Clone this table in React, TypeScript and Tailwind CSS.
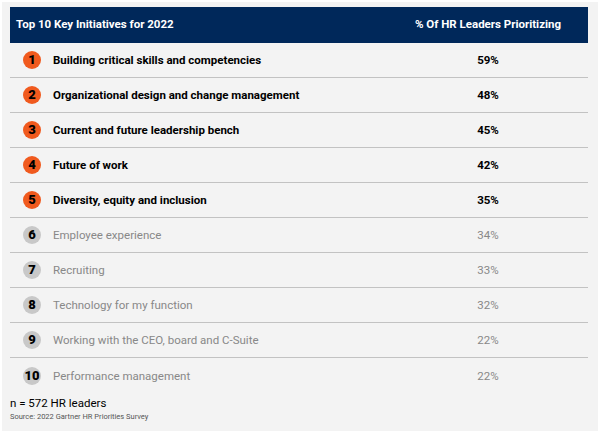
const rows = [
  { n: 1, label: "Building critical skills and competencies", pct: "59%", top: true },
  { n: 2, label: "Organizational design and change management", pct: "48%", top: true },
  { n: 3, label: "Current and future leadership bench", pct: "45%", top: true },
  { n: 4, label: "Future of work", pct: "42%", top: true },
  { n: 5, label: "Diversity, equity and inclusion", pct: "35%", top: true },
  { n: 6, label: "Employee experience", pct: "34%", top: false },
  { n: 7, label: "Recruiting", pct: "33%", top: false },
  { n: 8, label: "Technology for my function", pct: "32%", top: false },
  { n: 9, label: "Working with the CEO, board and C-Suite", pct: "22%", top: false },
  { n: 10, label: "Performance management", pct: "22%", top: false },
];

export default function App() {
  return (
    <div className="w-[600px] h-[433px] bg-white pt-[2px] pl-[2px] pr-[2px] font-['Roboto',_'Liberation_Sans',_sans-serif]">
      <div className="h-[429px] bg-[#f3f3f3] pl-[8px] pr-[10px] pt-[5px]">
        <div className="flex h-[36px] items-center bg-[#00285a] text-[11.5px] font-bold text-white">
          <div className="flex-1 pl-[6px]">Top 10 Key Initiatives for 2022</div>
          <div className="w-[200px] text-center">% Of HR Leaders Prioritizing</div>
        </div>
        {rows.map((r, i) => (
          <div
            key={r.n}
            className={`flex h-[35px] items-center text-[11.5px] ${
              i < rows.length - 1 ? "border-b-[1.5px] border-[#c2c2c2]" : ""
            } ${r.top ? "font-bold text-black" : "text-[#888888]"}`}
          >
            <div className="flex w-[43px] justify-center pl-[1px]">
              <span
                className={`flex h-[18px] w-[18px] items-center justify-center rounded-full text-[13px] font-black text-black ${
                  r.top ? "bg-[#f05a1e]" : "bg-[#c8c8c8]"
                }`}
              >
                {r.n}
              </span>
            </div>
            <div className="flex-1 pt-[2px]">{r.label}</div>
            <div className="w-[200px] pt-[2px] text-center">{r.pct}</div>
          </div>
        ))}
        <div className="pt-[2px] text-[11.5px] leading-[16px] text-black">n = 572 HR leaders</div>
        <div className="text-[7.5px] leading-[12px] text-[#555]">Source: 2022 Gartner HR Priorities Survey</div>
      </div>
    </div>
  );
}
